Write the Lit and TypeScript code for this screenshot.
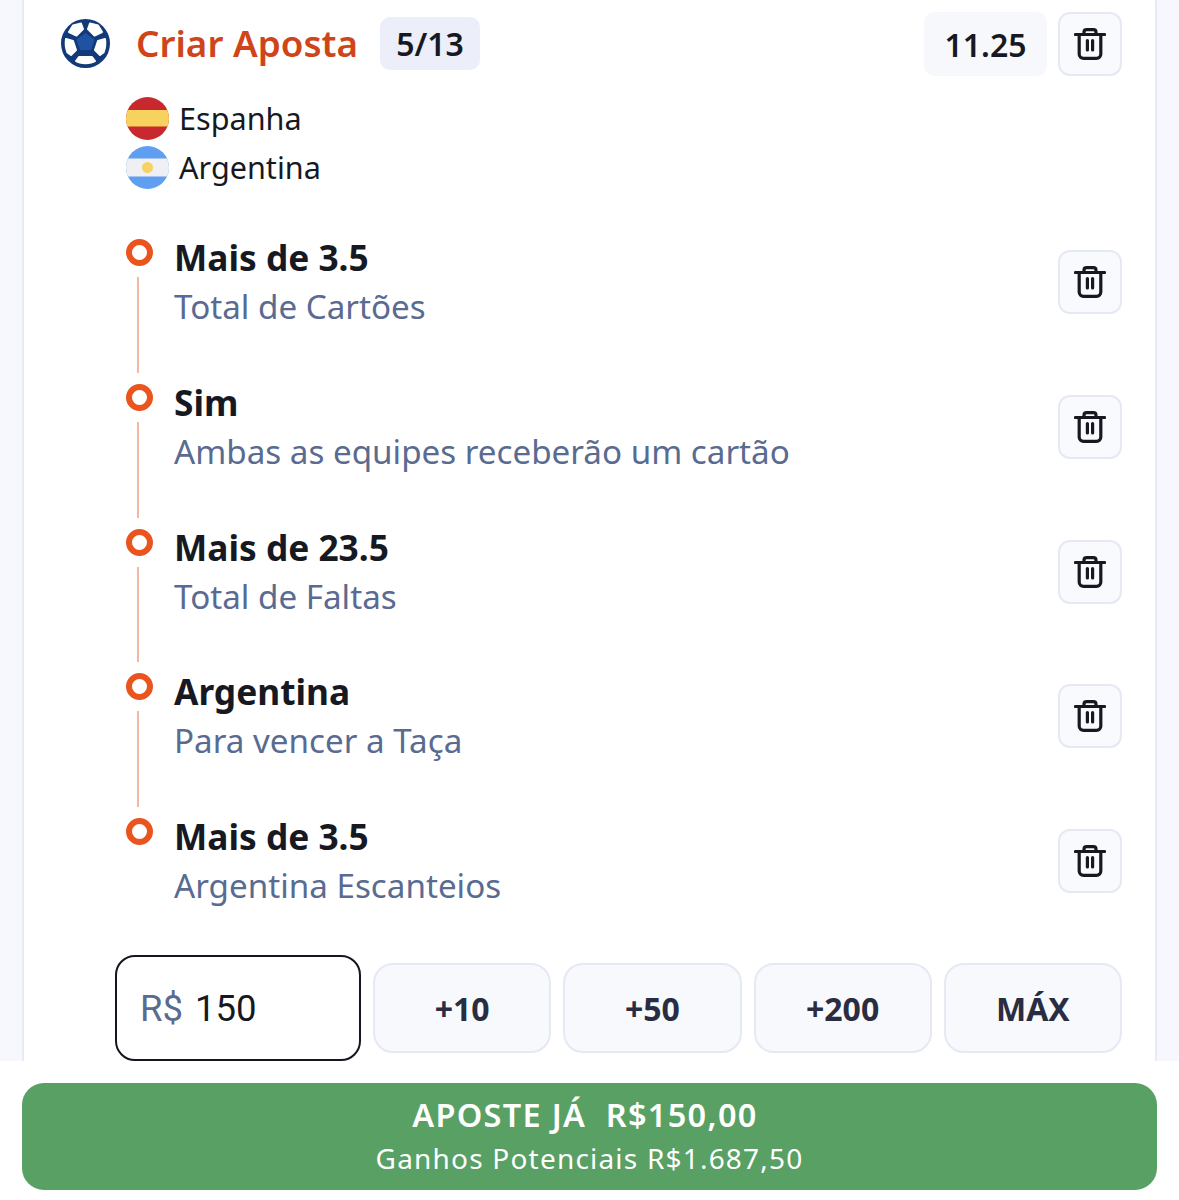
import { LitElement, html, css } from "lit";
import { customElement } from "lit/decorators.js";

const trash = html`<svg class="trash" viewBox="0 0 32 32" fill="none" stroke="#171922" stroke-width="3.2" stroke-linecap="round" stroke-linejoin="round">
  <path d="M1.5 6.5H30.5" />
  <path d="M10 6V4.2C10 2.6 11.2 1.6 12.6 1.6H19.4C20.8 1.6 22 2.6 22 4.2V6" />
  <path d="M5.2 7V26C5.2 28.6 7 30.4 9.6 30.4H22.4C25 30.4 26.8 28.6 26.8 26V7" />
  <path d="M13.4 12.5V22M18.6 12.5V22" />
</svg>`;

const ball = html`<svg class="ball" viewBox="0 0 49 49">
  <circle cx="24.5" cy="24.5" r="24.5" fill="#123a78" />
  <path d="M24.5 14L33.5 20.5L30 31H19L15.5 20.5Z" fill="#1f52a3" />
  <g fill="#fff" stroke="#fff" stroke-width="2" stroke-linejoin="round">
    <path d="M12 6.5L20 4.5L22 10L15.5 16.5L8 13Z" />
    <path d="M37 6.5L29 4.5L27 10L33.5 16.5L41 13Z" />
    <path d="M5 20L12 22L15 31L10 36L6.5 33.5C5 30 4.2 25 5 20Z" />
    <path d="M44 20L37 22L34 31L39 36L42.5 33.5C44 30 44.8 25 44 20Z" />
    <path d="M18 38H31L34 42C30 45 19 45 15 42Z" />
  </g>
</svg>`;

const spain = html`<svg class="flag" viewBox="0 0 43 43">
  <defs><clipPath id="c1"><circle cx="21.5" cy="21.5" r="21.5" /></clipPath></defs>
  <g clip-path="url(#c1)">
    <rect width="43" height="43" fill="#c8292e" />
    <rect y="13" width="43" height="16.5" fill="#f8d25f" />
  </g>
</svg>`;

const argentina = html`<svg class="flag" viewBox="0 0 43 43">
  <defs><clipPath id="c2"><circle cx="21.5" cy="21.5" r="21.5" /></clipPath></defs>
  <g clip-path="url(#c2)">
    <rect width="43" height="43" fill="#5f9ef0" />
    <rect y="12.5" width="43" height="18" fill="#eef0f3" />
    <circle cx="21.5" cy="21.5" r="5.5" fill="#f8d25f" />
  </g>
</svg>`;

const legs = [
  ["Mais de 3.5", "Total de Cartões"],
  ["Sim", "Ambas as equipes receberão um cartão"],
  ["Mais de 23.5", "Total de Faltas"],
  ["Argentina", "Para vencer a Taça"],
  ["Mais de 3.5", "Argentina Escanteios"],
];

@customElement("app-root")
export class AppRoot extends LitElement {
  static styles = css`
    :host {
      display: block;
      width: 1179px;
      height: 1200px;
      overflow: hidden;
      background: #f7f8fd;
      font-family: "Noto Sans", sans-serif;
      color: #171922;
    }
    .card {
      box-sizing: border-box;
      width: 1135px;
      height: 1083px;
      margin: -22px 0 0 22px;
      padding: 32px 33px 0 37px;
      background: #fff;
      border: 2px solid #e8ebf5;
      border-bottom: 0;
      border-radius: 24px 24px 0 0;
    }
    .header {
      display: flex;
      align-items: center;
      height: 64px;
    }
    .ball {
      width: 49px;
      height: 49px;
      flex: none;
      margin-top: -1px;
    }
    .title {
      margin: -2px 0 0 26px;
      font-size: 36.8px;
      font-weight: 600;
      color: #cf4519;
      white-space: nowrap;
    }
    .count {
      margin: -1px 0 0 22px;
      width: 100px;
      height: 53px;
      border-radius: 10px;
      background: #eceef9;
      display: flex;
      align-items: center;
      justify-content: center;
      font-size: 32px;
      font-weight: 600;
    }
    .odds {
      margin-left: auto;
      width: 123px;
      height: 64px;
      border-radius: 10px;
      background: #f7f8fc;
      display: flex;
      align-items: center;
      justify-content: center;
      font-size: 32px;
      font-weight: 600;
    }
    .del {
      box-sizing: border-box;
      flex: none;
      width: 64px;
      height: 64px;
      margin-left: 11px;
      border: 2px solid #e6e9f4;
      border-radius: 12px;
      background: #f9fafd;
      display: flex;
      align-items: center;
      justify-content: center;
    }
    .trash {
      width: 32px;
      height: 32px;
    }
    .teams {
      margin: 21px 0 0 65px;
      display: flex;
      flex-direction: column;
      gap: 6px;
    }
    .team {
      display: flex;
      align-items: center;
      gap: 10px;
      height: 43px;
      font-size: 30.6px;
    }
    .team span {
      margin-top: -2px;
    }
    .flag {
      width: 43px;
      height: 43px;
      flex: none;
    }
    .legs {
      margin: 50px 0 0 65px;
    }
    .leg {
      display: flex;
      height: 144.75px;
    }
    .leg:last-child {
      height: 137px;
    }
    .rail {
      width: 27px;
      flex: none;
      display: flex;
      flex-direction: column;
      align-items: center;
    }
    .dot {
      box-sizing: border-box;
      width: 27px;
      height: 27px;
      flex: none;
      border: 6px solid #e9541f;
      border-radius: 50%;
    }
    .line {
      flex: 1;
      width: 2px;
      margin: 11px 3px 11px 0;
      background: #f2b9a2;
    }
    .text {
      flex: 1;
      margin: -6px 0 0 21px;
    }
    .pick {
      font-size: 35.3px;
      line-height: 49px;
      font-weight: 700;
    }
    .market {
      font-size: 33.2px;
      line-height: 49px;
      color: #5a6b91;
    }
    .leg .del {
      margin-top: 11px;
    }
    .stake {
      display: flex;
      align-items: center;
      gap: 12px;
      margin-left: 54px;
    }
    .input {
      box-sizing: border-box;
      width: 246px;
      height: 106px;
      flex: none;
      padding-left: 23px;
      border: 2.5px solid #15161f;
      border-radius: 20px;
      display: flex;
      align-items: center;
      gap: 12px;
      font-family: "Roboto", sans-serif;
      font-size: 36.5px;
    }
    .input span {
      color: #5a6b91;
    }
    .chip {
      box-sizing: border-box;
      flex: 1;
      height: 90px;
      border: 2.5px solid #e6e9f4;
      border-radius: 20px;
      background: #f7f9fd;
      display: flex;
      align-items: center;
      justify-content: center;
      font-size: 32px;
      font-weight: 700;
      color: #2a2d42;
    }
    .footer {
      height: 139px;
      padding: 22px 22px 0 22px;
      background: #fff;
    }
    .cta {
      height: 107px;
      border-radius: 22px;
      background: #58a064;
      color: #fff;
      display: flex;
      flex-direction: column;
      align-items: center;
      justify-content: center;
      gap: 1px;
    }
    .cta b {
      margin-right: 9px;
      font-size: 32.5px;
      line-height: 42px;
      font-weight: 600;
      letter-spacing: 1.3px;
      white-space: pre;
    }
    .cta span {
      font-size: 28px;
      line-height: 42px;
      letter-spacing: 1.2px;
    }
  `;

  render() {
    return html`
      <div class="card">
        <div class="header">
          ${ball}
          <div class="title">Criar Aposta</div>
          <div class="count">5/13</div>
          <div class="odds">11.25</div>
          <div class="del">${trash}</div>
        </div>
        <div class="teams">
          <div class="team">${spain}<span>Espanha</span></div>
          <div class="team">${argentina}<span>Argentina</span></div>
        </div>
        <div class="legs">
          ${legs.map(
            ([pick, market], i) => html`
              <div class="leg">
                <div class="rail">
                  <div class="dot"></div>
                  ${i < legs.length - 1 ? html`<div class="line"></div>` : ""}
                </div>
                <div class="text">
                  <div class="pick">${pick}</div>
                  <div class="market">${market}</div>
                </div>
                <div class="del">${trash}</div>
              </div>
            `
          )}
        </div>
        <div class="stake">
          <div class="input"><span>R$</span>150</div>
          <div class="chip">+10</div>
          <div class="chip">+50</div>
          <div class="chip">+200</div>
          <div class="chip">MÁX</div>
        </div>
      </div>
      <div class="footer">
        <div class="cta">
          <b>APOSTE JÁ  R$150,00</b>
          <span>Ganhos Potenciais R$1.687,50</span>
        </div>
      </div>
    `;
  }
}
